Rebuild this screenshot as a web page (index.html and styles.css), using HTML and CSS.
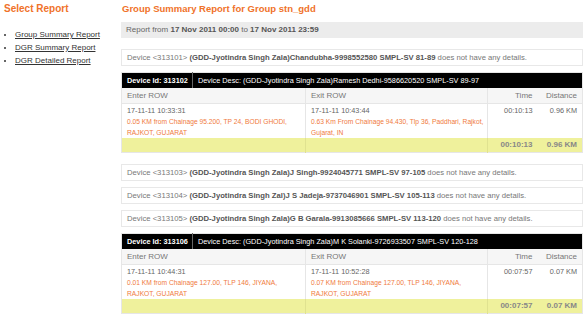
FILE: index.html
```html
<!DOCTYPE html>
<html lang="en">
<head>
<meta charset="UTF-8" />
<title>Group Summary Report</title>
<link rel="stylesheet" href="styles.css">
</head>
<body>
<div class="page">
  <div class="sidebar">
    <h2>Select Report</h2>
    <ul>
      <li><a href="#">Group Summary Report</a></li>
      <li><a href="#">DGR Summary Report</a></li>
      <li><a href="#">DGR Detailed Report</a></li>
    </ul>
  </div>

  <div class="main">
    <h1>Group Summary Report for Group stn_gdd</h1>

    <div class="range">Report from <b>17 Nov 2011 00:00</b> to <b>17 Nov 2011 23:59</b></div>

    <div class="note first">Device &lt;313101&gt; <b>(GDD-Jyotindra Singh Zala)Chandubha-9998552580 SMPL-SV 81-89</b> does not have any details.</div>

    <table class="trip">
      <colgroup>
        <col class="c-id">
        <col class="c-enter">
        <col class="c-exit">
        <col class="c-time">
        <col class="c-dist">
      </colgroup>
      <tr class="dev">
        <td class="dev-id">Device Id: 313102</td>
        <td colspan="4">Device Desc: (GDD-Jyotindra Singh Zala)Ramesh Dedhi-9586620520 SMPL-SV 89-97</td>
      </tr>
      <tr class="head">
        <td colspan="2">Enter ROW</td>
        <td>Exit ROW</td>
        <td class="num">Time</td>
        <td class="num dist">Distance</td>
      </tr>
      <tr class="row">
        <td colspan="2">17-11-11 10:33:31<br><span class="addr">0.05 KM from Chainage 95.200, TP 24, BODI GHODI,<br>RAJKOT, GUJARAT</span></td>
        <td>17-11-11 10:43:44<br><span class="addr">0.63 Km From Chainage 94.430, Tlp 36, Paddhari, Rajkot,<br>Gujarat, IN</span></td>
        <td class="num">00:10:13</td>
        <td class="num dist">0.96 KM</td>
      </tr>
      <tr class="total">
        <td colspan="2"></td>
        <td></td>
        <td class="num">00:10:13</td>
        <td class="num dist">0.96 KM</td>
      </tr>
    </table>

    <div class="note">Device &lt;313103&gt; <b>(GDD-Jyotindra Singh Zala)J Singh-9924045771 SMPL-SV 97-105</b> does not have any details.</div>
    <div class="note">Device &lt;313104&gt; <b>(GDD-Jyotindra Singh Zal)J S Jadeja-9737046901 SMPL-SV 105-113</b> does not have any details.</div>
    <div class="note">Device &lt;313105&gt; <b>(GDD-Jyotindra Singh Zala)G B Garala-9913085666 SMPL-SV 113-120</b> does not have any details.</div>

    <table class="trip">
      <colgroup>
        <col class="c-id">
        <col class="c-enter">
        <col class="c-exit">
        <col class="c-time">
        <col class="c-dist">
      </colgroup>
      <tr class="dev">
        <td class="dev-id">Device Id: 313106</td>
        <td colspan="4">Device Desc: (GDD-Jyotindra Singh Zala)M K Solanki-9726933507 SMPL-SV 120-128</td>
      </tr>
      <tr class="head">
        <td colspan="2">Enter ROW</td>
        <td>Exit ROW</td>
        <td class="num">Time</td>
        <td class="num dist">Distance</td>
      </tr>
      <tr class="row">
        <td colspan="2">17-11-11 10:44:31<br><span class="addr">0.01 KM from Chainage 127.00, TLP 146, JIYANA,<br>RAJKOT, GUJARAT</span></td>
        <td>17-11-11 10:52:28<br><span class="addr">0.07 KM from Chainage 127.00, TLP 146, JIYANA,<br>RAJKOT, GUJARAT</span></td>
        <td class="num">00:07:57</td>
        <td class="num dist">0.07 KM</td>
      </tr>
      <tr class="total">
        <td colspan="2"></td>
        <td></td>
        <td class="num">00:07:57</td>
        <td class="num dist">0.07 KM</td>
      </tr>
    </table>
  </div>
</div>
</body>
</html>
```

FILE: styles.css
```css
body {
  margin: 0;
  font-family: "Liberation Sans", Arial, sans-serif;
  font-size: 8px;
  color: #555;
  background-color: #fff;
}

.page {
  display: flex;
}

.sidebar {
  width: 117px;
  padding: 3px 0 0 4px;
}

.sidebar h2 {
  margin: 0;
  font-size: 10px;
  line-height: 12px;
  color: #f0722a;
}

.sidebar ul {
  margin: 13px 0 0;
  padding-left: 11px;
  list-style: square;
}

.sidebar li {
  line-height: 13px;
  color: #666;
}

.sidebar a {
  color: #333;
}

.main {
  flex: 1;
  min-width: 0;
  padding: 3px 2px 0 0;
}

.main h1 {
  margin: 0 0 0 1px;
  font-size: 9.5px;
  line-height: 12px;
  color: #f0722a;
}

.range {
  margin-top: 7px;
  height: 16px;
  line-height: 16px;
  padding-left: 5px;
  background-color: #ececec;
  color: #666;
}

.range b {
  color: #555;
}

.note {
  margin-top: 6px;
  border: 1px solid #e8e8e8;
  line-height: 15px;
  padding-left: 5px;
  font-size: 7.7px;
  color: #777;
  white-space: nowrap;
  overflow: hidden;
}

.note b {
  color: #555;
}

.note.first {
  margin-top: 11px;
}

.trip {
  width: 100%;
  table-layout: fixed;
  margin-top: 6px;
  margin-bottom: 11px;
  border-collapse: collapse;
  border: 1px solid #e6e6e6;
}

.c-id { width: 71px; }
.c-enter { width: 113px; }
.c-time { width: 50px; }
.c-dist { width: 45px; }

.trip td {
  padding: 0 5px;
  vertical-align: top;
  white-space: nowrap;
  overflow: hidden;
}

.dev td {
  background-color: #000;
  color: #fff;
  height: 15px;
  line-height: 15px;
  font-size: 7.3px;
  border-left: 1px solid #666;
}

.dev .dev-id {
  font-weight: bold;
  border-left: none;
}

.head td {
  background-color: #f6f6f6;
  color: #777;
  height: 15px;
  line-height: 15px;
  border-left: 1px solid #e6e6e6;
  border-bottom: 1px solid #e6e6e6;
}

.head td:first-child {
  border-left: none;
}

.row td {
  height: 34px;
  padding-top: 1px;
  line-height: 11px;
  font-size: 7.3px;
  color: #666;
  border-left: 1px solid #e6e6e6;
  box-sizing: border-box;
}

.row td:first-child {
  border-left: none;
}

.trip .dist {
  border-left: none;
}

.addr {
  color: #f07a3c;
  font-size: 6.7px;
}

.num {
  text-align: right;
}

.total td {
  height: 14px;
  line-height: 14px;
  background-color: #eff19c;
  color: #888;
  font-weight: bold;
  border-left: 1px solid #e0e290;
}

.total td:first-child {
  border-left: none;
}
```
